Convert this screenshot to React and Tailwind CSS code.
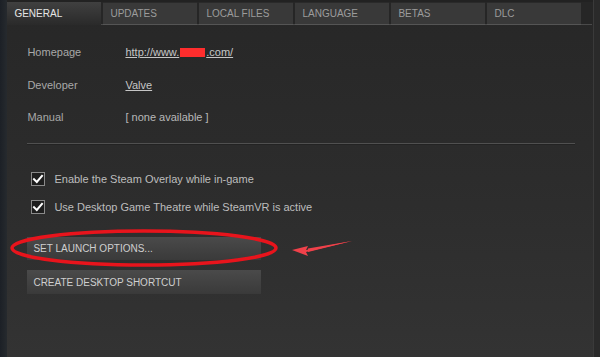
import React from "react";

const tabs = ["GENERAL", "UPDATES", "LOCAL FILES", "LANGUAGE", "BETAS", "DLC"];

function Check() {
  return (
    <div className="w-[14px] h-[14px] border border-[#8a8a8a] bg-[#1e1e1e] flex items-center justify-center">
      <svg width="12" height="12" viewBox="0 0 12 12">
        <path d="M2 6.2 L4.8 9 L10 2.8" fill="none" stroke="#ffffff" strokeWidth="2" strokeLinecap="square" />
      </svg>
    </div>
  );
}

export default function App() {
  return (
    <div
      className="relative w-[600px] h-[357px] flex bg-[#2d2d2d] overflow-hidden"
      style={{ fontFamily: '"Liberation Sans", Arial, sans-serif' }}
    >
      <div className="w-[8px] h-full bg-gradient-to-r from-[#1c2026] to-[#262a2e]" />
      <div className="flex-1 flex flex-col bg-gradient-to-b from-[#272727] via-[#2c2c2c] to-[#333333]">
        <div className="flex pt-[2px] bg-[#222222]">
          {tabs.map((t, i) =>
            i === 0 ? (
              <div
                key={t}
                className="w-[94px] h-[23px] flex items-center pl-[7px] text-[10px] text-[#e6e6e6] bg-gradient-to-b from-[#404040] to-[#2a2a2a]"
              >
                {t}
              </div>
            ) : (
              <div key={t} className="flex">
                <div className="w-[2px] h-[23px] bg-[#262626] border-b border-[#4a4a4a]" />
                <div className="w-[94px] h-[23px] flex items-center pl-[7px] text-[10px] text-[#9c9c9c] bg-[#393939] border-t border-[#2a2a2a] border-b border-b-[#555555]">
                  {t}
                </div>
              </div>
            )
          )}
          <div className="w-[11px] h-[23px] bg-[#262626] border-b border-[#4a4a4a]" />
          <div className="flex-1 bg-[#262626]" />
        </div>

        <div className="pl-[20px] pr-[18px] pt-[20px] text-[11px]">
          <div className="flex items-center h-[14px]">
            <div className="w-[98px] text-[#a8a8a8]">Homepage</div>
            <div className="text-[#c6c6c6] underline flex items-center">
              http://www.
              <span className="inline-block w-[25px] h-[9px] bg-[#ff2d2d] mx-[1px]" />
              .com/
            </div>
          </div>
          <div className="flex items-center h-[14px] mt-[19px]">
            <div className="w-[98px] text-[#a8a8a8]">Developer</div>
            <div className="text-[#c6c6c6] underline">Valve</div>
          </div>
          <div className="flex items-center h-[14px] mt-[18px]">
            <div className="w-[98px] text-[#a8a8a8]">Manual</div>
            <div className="text-[#b8b8b8]">[ none available ]</div>
          </div>

          <div className="mt-[19px] h-[2px] w-[548px] bg-[#505050] border-b border-[#232323]" />

          <div className="mt-[26px] pl-[4px] flex items-center gap-[9px]">
            <Check />
            <span className="text-[#bdbdbd]">Enable the Steam Overlay while in-game</span>
          </div>
          <div className="mt-[11px] pl-[4px] flex items-center gap-[9px]">
            <Check />
            <span className="text-[#bdbdbd]">Use Desktop Game Theatre while SteamVR is active</span>
          </div>

          <div className="mt-[22px] w-[234px] h-[23px] flex items-center pl-[6px] text-[10px] text-[#cfcfcf] bg-gradient-to-b from-[#4a4a4a] to-[#3a3a3a]">
            SET LAUNCH OPTIONS...
          </div>
          <div className="mt-[10px] w-[234px] h-[24px] flex items-center pl-[6px] text-[10px] text-[#cfcfcf] bg-gradient-to-b from-[#4a4a4a] to-[#3a3a3a]">
            CREATE DESKTOP SHORTCUT
          </div>
        </div>
      </div>
      <div className="w-[7px] h-full bg-[#2a2a2a] border-l border-[#3a3a3a]" />

      <svg className="absolute left-0 top-0 pointer-events-none" width="600" height="357">
        <ellipse cx="144" cy="248" rx="132" ry="17" fill="none" stroke="#e8141c" strokeWidth="3.5" />
        <path d="M352 241 L306 250 L308 246 L292 250 L308 256 L306 252 Z" fill="#f0414a" />
        <path d="M352 241 L308 248.5 L308 252 Z" fill="#f0414a" />
      </svg>
    </div>
  );
}
